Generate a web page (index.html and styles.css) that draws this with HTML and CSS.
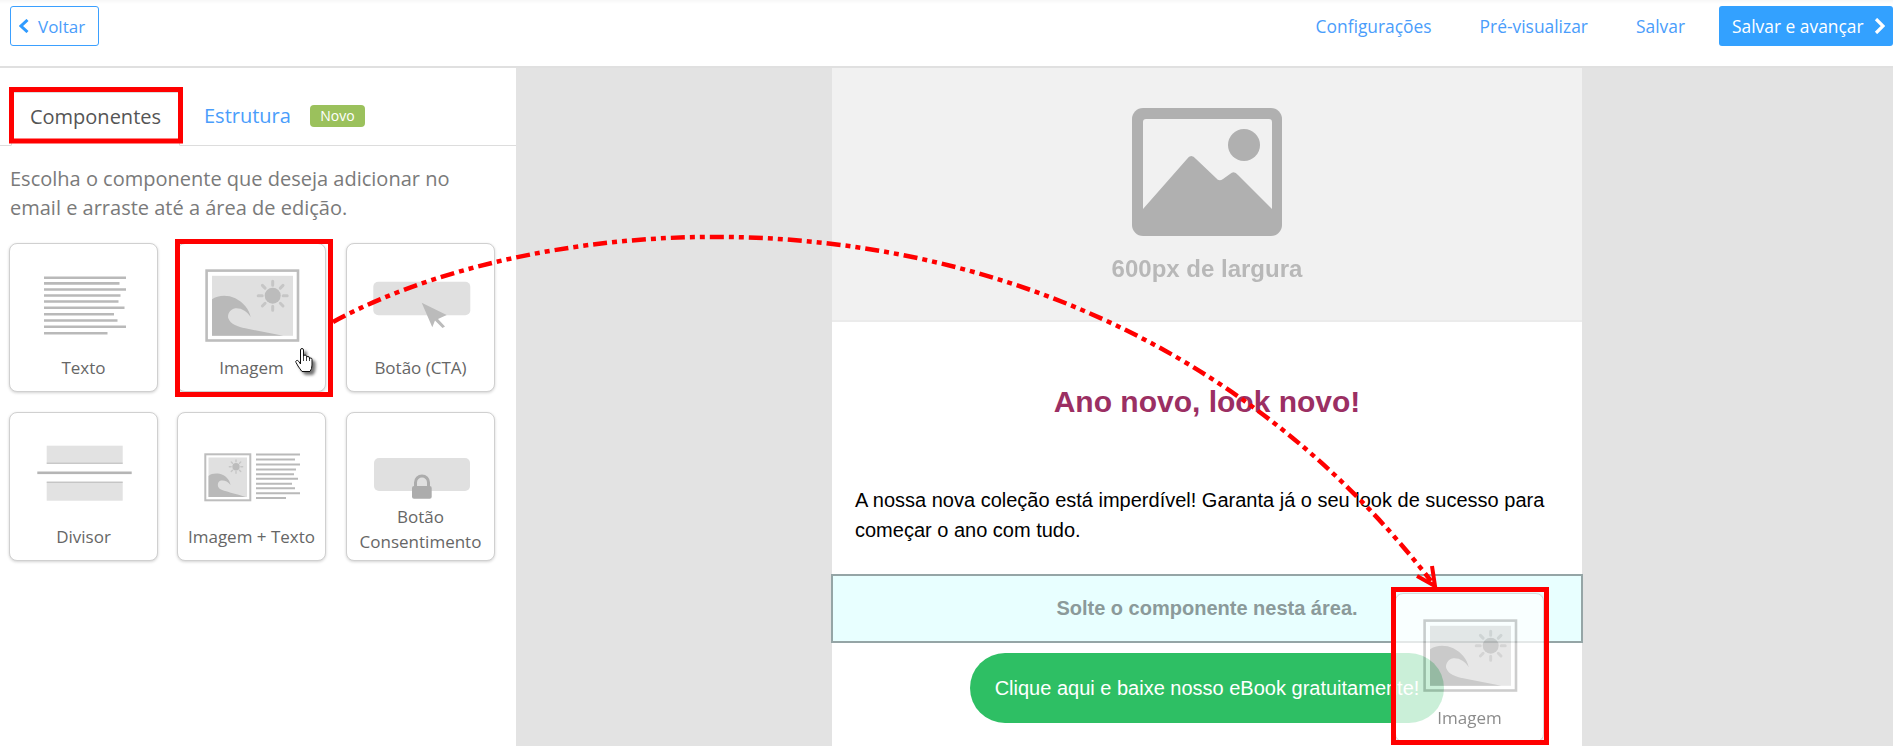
FILE: index.html
```html
<!DOCTYPE html>
<html lang="pt-BR">
<head>
<meta charset="utf-8">
<title>Editor de email</title>
<link rel="stylesheet" href="styles.css">
</head>
<body>
<svg class="defs" width="0" height="0" aria-hidden="true">
  <defs>
    <g id="sun">
      <circle cx="0" cy="0" r="8" fill="#bcbcbc"/>
      <path d="M0 -14.5V-10.5M0 10.5V14.5M-14.5 0H-10.5M10.5 0H14.5M-10.3 -10.3L-7.6 -7.6M7.6 7.6L10.3 10.3M-10.3 10.3L-7.6 7.6M7.6 -7.6L10.3 -10.3" stroke="#c6c6c6" stroke-width="3" stroke-linecap="round"/>
    </g>
    <g id="picture">
      <rect x="1.3" y="1.3" width="91.4" height="69.900" fill="#fff" stroke="#bdbdbd" stroke-width="2.6"/>
      <rect x="6.7" y="6.5" width="81" height="60" fill="#e0e0e0"/>
      <use href="#sun" x="67.4" y="26.4"/>
      <path d="M6.7 30C12 26 22 25 30 29C38 33 44 40 45.4 48C42 42 36 38.5 30 39C24 40 22 46 23 49C25 55 33 57.5 40 59L78 66.5H6.7Z" fill="#b9b9b9"/>
    </g>
    <g id="lines" stroke="#b9b9b9" stroke-width="2.6">
      <path d="M0 1.3H82M0 6.9H75.5M0 13H82M0 19H76.5M0 25H74.5M0 31.3H80.5M0 37.7H70M0 44H73.5M0 50.3H82M0 56.7H63.5"/>
    </g>
  </defs>
</svg>

<header class="topbar">
  <a class="btn btn-outline">
    <svg class="chev" width="10" height="14" viewBox="0 0 10 14"><path d="M8.5 1L2 7L8.5 13" fill="none" stroke="#2f9bff" stroke-width="3"/></svg>
    Voltar
  </a>
  <nav class="actions">
    <a class="link">Configurações</a>
    <a class="link">Pré-visualizar</a>
    <a class="link">Salvar</a>
    <a class="btn btn-primary">Salvar e avançar
      <svg class="chev" width="11" height="16" viewBox="0 0 11 16"><path d="M2 1L9 8L2 15" fill="none" stroke="#fff" stroke-width="3.2"/></svg>
    </a>
  </nav>
</header>

<div class="workspace">
  <aside class="sidebar">
    <div class="tabs">
      <span class="tab tab-active">Componentes</span>
      <span class="tab tab-link">Estrutura</span>
      <span class="badge">Novo</span>
    </div>
    <p class="hint">Escolha o componente que deseja adicionar no email e arraste até a área de edição.</p>
    <div class="cards">
      <div class="card">
        <svg class="card-icon" viewBox="0 0 149 105"><use href="#lines" x="35" y="33.5"/></svg>
        <span class="card-label">Texto</span>
      </div>
      <div class="card">
        <svg class="card-icon" viewBox="0 0 149 105"><use href="#picture" x="28.3" y="26.3"/></svg>
        <span class="card-label">Imagem</span>
      </div>
      <div class="card">
        <svg class="card-icon" viewBox="0 0 149 105">
          <rect x="27.3" y="38.7" width="97" height="33.6" rx="5" fill="#e0e0e0"/>
          <path d="M75.7 59.7L100.7 72L92 76L99 83.5L96.5 85L89 77.5L86.3 84.3Z" fill="#bbb"/>
        </svg>
        <span class="card-label">Botão (CTA)</span>
      </div>
      <div class="card">
        <svg class="card-icon" viewBox="0 0 149 105">
          <rect x="37.7" y="33.7" width="76" height="18" fill="#e2e2e2"/>
          <rect x="37.7" y="50.7" width="76" height="1" fill="#b9b9b9"/>
          <rect x="28.3" y="59.5" width="94.4" height="2.6" fill="#b5b5b5"/>
          <rect x="37.7" y="69.7" width="76" height="19" fill="#e2e2e2"/>
          <rect x="37.7" y="69.7" width="76" height="1" fill="#b9b9b9"/>
        </svg>
        <span class="card-label">Divisor</span>
      </div>
      <div class="card">
        <svg class="card-icon" viewBox="0 0 149 105">
          <rect x="28.3" y="42.3" width="45" height="46" fill="#fff" stroke="#bdbdbd" stroke-width="2"/>
          <rect x="31.5" y="45.5" width="38.5" height="39.5" fill="#e0e0e0"/>
          <use href="#sun" transform="translate(59 54.7) scale(.46)"/>
          <path d="M31.5 64C35 61 41 61 46 63C50 65 53 69 53.5 73C51 69 47 68 44 68.5C40 69.5 40 75 43 77C46 79 60 82 69 85H31.5Z" fill="#b9b9b9"/>
          <g stroke="#b9b9b9" stroke-width="2"><path d="M79 42.5H123M79 47.5H118M79 52.5H123M79 57.5H119M79 62.2H117M79 66.8H121M79 71.7H115M79 76.3H118M79 81.3H123M79 86H109"/></g>
        </svg>
        <span class="card-label">Imagem + Texto</span>
      </div>
      <div class="card">
        <svg class="card-icon" viewBox="0 0 149 105">
          <rect x="28" y="46" width="96" height="33" rx="5" fill="#e0e0e0"/>
          <path d="M69.5 74V70.5a6.5 6.5 0 0 1 13 0V74" fill="none" stroke="#acacac" stroke-width="3"/>
          <rect x="66" y="74" width="19.7" height="12.7" rx="2" fill="#acacac"/>
        </svg>
        <span class="card-label card-label-two">Botão Consentimento</span>
      </div>
    </div>
  </aside>

  <main class="canvas">
    <article class="email">
      <div class="placeholder">
        <svg class="placeholder-icon" width="150" height="128" viewBox="0 0 150 128">
          <rect width="150" height="128" rx="11" fill="#b0b0b0"/>
          <path d="M14 11H137Q140 11 140 14V101L106 67Q102 62 98 66L91 71Q87 74 84 70L64 51Q59 45 55 51L11 101V14Q11 11 14 11Z" fill="#f1f1f1"/>
          <ellipse cx="112" cy="37" rx="16" ry="16" fill="#b0b0b0"/>
        </svg>
        <span class="placeholder-text">600px de largura</span>
      </div>
      <h1 class="headline">Ano novo, look novo!</h1>
      <p class="copy">A nossa nova coleção está imperdível! Garanta já o seu look de sucesso para começar o ano com tudo.</p>
      <div class="dropzone">Solte o componente nesta área.</div>
      <a class="cta">Clique aqui e baixe nosso eBook gratuitamente!</a>
    </article>
  </main>
</div>

<div class="card ghost">
  <svg class="card-icon" viewBox="0 0 149 105"><use href="#picture" x="28.3" y="26.3"/></svg>
  <span class="card-label">Imagem</span>
</div>

<svg class="annotations" width="1893" height="746" viewBox="0 0 1893 746">
  <defs>
    <filter id="hand-shadow" x="-30%" y="-30%" width="180%" height="180%">
      <feDropShadow dx="3" dy="3" stdDeviation="1.8" flood-color="#000" flood-opacity=".55"/>
    </filter>
  </defs>
  <g fill="none" stroke="#f00" stroke-width="5">
    <rect x="11.5" y="89.5" width="169" height="51.5"/>
    <rect x="177.5" y="241.5" width="153" height="153"/>
    <rect x="1393.5" y="589.5" width="153" height="153"/>
  </g>
  <path d="M333 322C560 198 1100 155 1431 581" fill="none" stroke="#f00" stroke-width="4.5" stroke-dasharray="14 5 5 5 5 5"/>
  <path d="M1417 576L1435 586L1432 566" fill="none" stroke="#f00" stroke-width="4"/>
  <g transform="translate(295 348)" filter="url(#hand-shadow)">
    <path d="M5.5 2Q5.5 .5 7 .5Q8.5 .5 8.5 2V8.5Q8.5 7 10 7Q11.5 7 11.5 8.5V9.5Q11.5 8.5 13 8.5Q14.5 8.5 14.5 10V11Q14.5 10 15.7 10Q17 10 17 11.5V17Q17 21 15 23.5H7Q5 21 3 18L1 14.5Q.3 13 1.5 12.5Q2.8 12 3.8 13.5L5.5 16Z" fill="#fff" stroke="#111" stroke-width="1"/>
    <path d="M8.5 8.5V13M11.5 9.5V13M14.5 11V13" fill="none" stroke="#111" stroke-width=".8"/>
  </g>
</svg>
</body>
</html>
```
FILE: styles.css
```css
* { box-sizing: border-box; }
html, body { margin: 0; height: 100%; }
body {
  width: 1893px;
  height: 746px;
  overflow: hidden;
  position: relative;
  background: #fff;
  font-family: "Open Sans", sans-serif;
  display: flex;
  flex-direction: column;
}
.defs { position: absolute; }

.topbar {
  height: 68px;
  flex: none;
  display: flex;
  justify-content: space-between;
  align-items: flex-start;
  padding: 6px 0 0 10px;
  background: linear-gradient(#f7f7f7, #fff 4px);
  border-bottom: 2px solid #e0e0e0;
}
.btn {
  height: 40px;
  display: flex;
  align-items: center;
  border-radius: 3px;
  font-size: 17.4px;
}
.btn-outline {
  width: 89px;
  padding-left: 8px;
  gap: 9px;
  border: 1px solid #3ba0ff;
  color: #4a9dfb;
  font-size: 17px;
}
.btn-primary {
  width: 174px;
  padding: 0 8px 0 13px;
  justify-content: space-between;
  background: #33a1ff;
  color: #fff;
}
.actions { display: flex; align-items: center; }
.link {
  font-size: 17.4px;
  color: #4a9dfb;
  margin-right: 48px;
}
.link:nth-child(3) { margin-right: 34px; }

.workspace { flex: 1; display: flex; min-height: 0; }
.sidebar { width: 516px; flex: none; background: #fff; }
.tabs {
  height: 78px;
  padding: 18px 0 0 11px;
  display: flex;
  align-items: center;
  border-bottom: 1px solid #ddd;
}
.tab { font-size: 20px; }
.tab-active {
  width: 169px;
  height: 54px;
  text-align: center;
  line-height: 47px;
  color: #555;
  background: #fff;
  border: 1px solid #ddd;
  border-bottom-color: #fff;
  align-self: flex-end;
  margin-bottom: -1px;
}
.tab-link { color: #4a9dfb; margin-left: 24px; }
.badge {
  margin-left: 19px;
  width: 55px;
  height: 22px;
  line-height: 22px;
  text-align: center;
  font-size: 14px;
  color: #fff;
  background: #9bc15c;
  border-radius: 4px;
}
.hint {
  margin: 18px 0 0 10px;
  width: 470px;
  font-size: 20px;
  line-height: 29px;
  color: #7a7a7a;
}
.cards {
  margin: 21px 0 0 9px;
  display: grid;
  grid-template-columns: 168px 169px 149px;
  grid-auto-rows: 149px;
  row-gap: 20px;
}
.card {
  width: 149px;
  height: 149px;
  position: relative;
  display: flex;
  flex-direction: column;
  align-items: center;
  background: #fff;
  border: 1px solid #d0d0d0;
  border-radius: 8px;
  box-shadow: 0 1px 3px rgba(0, 0, 0, .18);
}
.card-icon {
  width: 149px;
  height: 105px;
  margin: -1px;
  flex: none;
  display: block;
}
.card-label {
  margin-top: 8px;
  font-size: 17px;
  line-height: 25px;
  color: #666;
  text-align: center;
}
.card-label-two { margin-top: -12px; width: 135px; }

.canvas {
  flex: 1;
  display: flex;
  justify-content: flex-start;
  padding-left: 316px;
  background: #e3e3e3;
  min-width: 0;
}
.email { width: 750px; height: 100%; background: #fff; }
.placeholder {
  height: 254px;
  display: flex;
  flex-direction: column;
  align-items: center;
  padding-top: 40px;
  background: #f1f1f1;
  border-bottom: 2px solid #ebebeb;
}
.placeholder-icon { display: block; flex: none; }
.placeholder-text {
  margin-top: 19px;
  font-family: "Liberation Sans", Arial, sans-serif;
  font-weight: 700;
  font-size: 24px;
  line-height: 28px;
  color: #b8b8b8;
  filter: blur(.5px);
}
.headline {
  margin: 62px 0 0;
  font-family: "Liberation Sans", Arial, sans-serif;
  font-size: 30px;
  line-height: 36px;
  font-weight: 700;
  text-align: center;
  color: #9b2f63;
}
.copy {
  margin: 65px 23px 0;
  font-family: "Liberation Sans", Arial, sans-serif;
  font-size: 20px;
  line-height: 30px;
  color: #000;
}
.dropzone {
  margin: 29px -1px 0;
  height: 69px;
  display: flex;
  align-items: center;
  justify-content: center;
  padding-bottom: 1px;
  background: #e8ffff;
  border: 2px solid #95a5a6;
  font-family: "Liberation Sans", Arial, sans-serif;
  font-weight: 700;
  font-size: 20px;
  color: #8b9a9a;
}
.cta {
  margin: 10px auto 0;
  width: 474px;
  height: 70px;
  display: flex;
  align-items: center;
  justify-content: center;
  border-radius: 35px;
  background: #2ebf64;
  color: #fff;
  font-family: "Liberation Sans", Arial, sans-serif;
  font-size: 20px;
}

.ghost {
  position: absolute;
  left: 1395px;
  top: 593px;
  opacity: .75;
}
.annotations {
  position: absolute;
  left: 0;
  top: 0;
  pointer-events: none;
}
```
